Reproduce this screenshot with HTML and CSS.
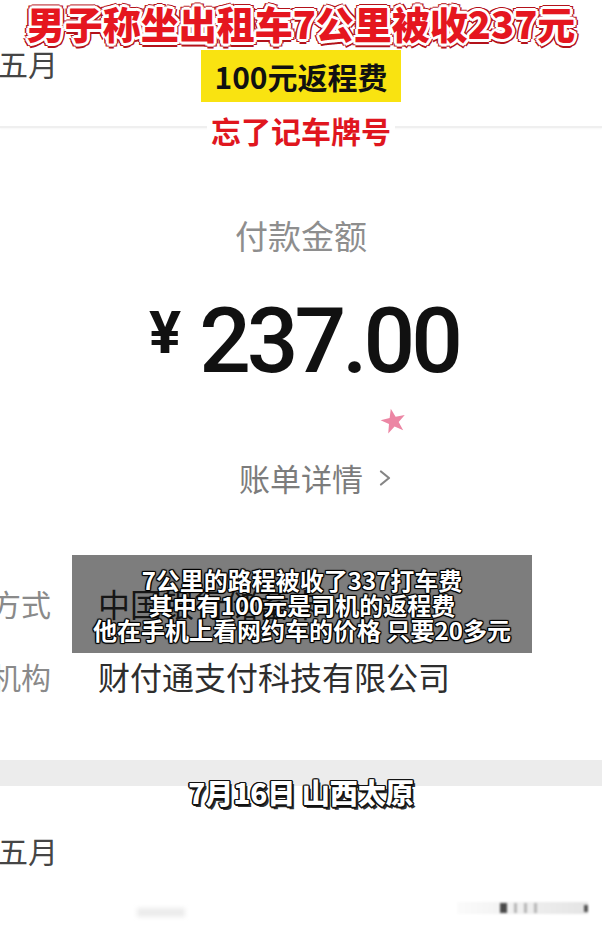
FILE: index.html
```html
<!DOCTYPE html>
<html lang="zh-CN">
<head>
  <meta charset="UTF-8" />
  <meta name="viewport" content="width=device-width, initial-scale=1.0"/>
  <title>付款金额</title>
  <link rel="stylesheet" href="styles.css">
</head>
<body>
  <div class="screen">
    <div class="month">五月</div>
    <div class="divider"></div>
    <div class="pay-label">付款金额</div>
    <div class="amount">
      <span class="yen">¥</span>
      <span class="num">237.00</span>
    </div>
    <div class="detail-link">
      <span>账单详情</span>
      <svg class="chevron" width="12" height="16" viewBox="0 0 12 16">
        <polyline points="2,1.5 10,8 2,14.5" fill="none" stroke="#858585" stroke-width="2.2" stroke-linecap="round" stroke-linejoin="round"/>
      </svg>
    </div>
    <div class="info-row first">
      <span class="info-key">支付方式</span>
      <span class="info-val">中国银行储蓄卡</span>
    </div>
    <div class="info-row">
      <span class="info-key">收单机构</span>
      <span class="info-val">财付通支付科技有限公司</span>
    </div>
    <div class="band"></div>
    <div class="month month-next">五月</div>
    <div class="smudges">
      <div class="smudge-left"></div>
      <div class="smudge-bar">
        <span class="stub dark"></span>
        <span class="stub"></span>
        <span class="stub"></span>
        <span class="stub"></span>
        <span class="stub end"></span>
      </div>
    </div>
  </div>

  <!-- video captions laid over the screenshot -->
  <div class="headline">
    <h1 class="title">男子称坐出租车7公里被收237元</h1>
    <div class="tag">100元返程费</div>
    <div class="subtitle">忘了记车牌号</div>
  </div>

  <svg class="star" width="27" height="27" viewBox="0 0 27 27">
    <polygon transform="rotate(-12 13.5 13.5)" points="13.5,0.5 16.56,9.29 25.86,9.48 18.45,15.11 21.14,24.02 13.5,18.7 5.86,24.02 8.55,15.11 1.14,9.48 10.44,9.29" fill="#ec86a4"/>
  </svg>

  <div class="caption">
    <div>7公里的路程被收了337打车费</div>
    <div>其中有100元是司机的返程费</div>
    <div>他在手机上看网约车的价格 只要20多元</div>
  </div>

  <div class="place">7月16日 山西太原</div>
</body>
</html>
```

FILE: styles.css
```css
body {
  margin: 0;
  width: 602px;
  height: 927px;
  overflow: hidden;
  position: relative;
  background: #fff;
  font-family: "Noto Sans CJK SC", sans-serif;
}

.screen {
  display: flex;
  flex-direction: column;
}

.month {
  margin: 48px 0 0 -2px;
  font-size: 30px;
  line-height: 30px;
  color: #454545;
}

.divider {
  margin-top: 48px;
  height: 2px;
  background: #efefef;
  box-shadow: 0 1px 2px rgba(0, 0, 0, 0.04);
}

.pay-label {
  margin-top: 89px;
  font-size: 33px;
  line-height: 36px;
  color: #8e8e8e;
  text-align: center;
}

.amount {
  margin-top: 38px;
  height: 100px;
  display: flex;
  justify-content: center;
  align-items: center;
  color: #111;
  font-family: Roboto, "Liberation Sans", sans-serif;
}

.yen {
  margin: 0 18px 16px 6px;
  font-size: 60px;
  line-height: 60px;
  font-weight: 700;
}

.num {
  font-size: 91px;
  line-height: 100px;
  font-weight: 500;
  letter-spacing: -4px;
}

.detail-link {
  margin-top: 70px;
  padding-left: 28px;
  display: flex;
  justify-content: center;
  align-items: center;
  gap: 16px;
  font-size: 31px;
  line-height: 34px;
  color: #7c7c7c;
}

.info-row {
  margin-top: 37px;
  height: 36px;
  display: flex;
  align-items: center;
  font-size: 32px;
  line-height: 36px;
}

.info-row.first {
  margin-top: 90px;
}

.info-key {
  flex: none;
  width: 120px;
  margin-left: -69px;
  text-align: right;
  font-size: 30px;
  color: #8a8a8a;
  white-space: nowrap;
}

.info-val {
  margin-left: 47px;
  color: #2e2e2e;
  white-space: nowrap;
}

.band {
  margin-top: 66px;
  height: 26px;
  background: #ececec;
}

.month-next {
  margin-top: 49px;
}

.smudges {
  margin-top: 33px;
  height: 20px;
  display: flex;
}

.smudge-left {
  margin: 10px 0 0 137px;
  width: 48px;
  height: 9px;
  background: #ececec;
  filter: blur(2px);
}

.smudge-bar {
  margin: 4px 14px 0 auto;
  width: 131px;
  height: 12px;
  display: flex;
  align-items: center;
  background: linear-gradient(to right, #fbfbfb, #e4e4e4);
  filter: blur(1.2px);
}

.stub {
  width: 3px;
  height: 10px;
  margin-left: 7px;
  background: #b8b8b8;
}

.stub.dark {
  width: 7px;
  margin-left: 43px;
  background: #4a4a4a;
}

.stub.end {
  width: 4px;
  height: 7px;
  margin-left: auto;
  background: #555;
}

/* captions */

.headline {
  position: absolute;
  top: 0;
  left: 0;
  right: 0;
  display: flex;
  flex-direction: column;
  align-items: center;
}

.title {
  margin: 0;
  font-size: 38px;
  line-height: 45px;
  font-weight: 900;
  color: #e5161f;
  white-space: nowrap;
  text-shadow:
    3px 0 0 #fff, -3px 0 0 #fff, 0 3px 0 #fff, 0 -3px 0 #fff,
    2px 2px 0 #fff, -2px 2px 0 #fff, 2px -2px 0 #fff, -2px -2px 0 #fff,
    4.5px 0 0.5px #b3121a, -4.5px 0 0.5px #b3121a, 0 4.5px 0.5px #b3121a, 0 -4.5px 0.5px #b3121a,
    3.2px 3.2px 0.5px #b3121a, -3.2px 3.2px 0.5px #b3121a, 3.2px -3.2px 0.5px #b3121a, -3.2px -3.2px 0.5px #b3121a;
}

.tag {
  margin-top: 5px;
  width: 200px;
  height: 52px;
  display: flex;
  justify-content: center;
  align-items: center;
  background: #f9e311;
  font-size: 30px;
  font-weight: 700;
  color: #111;
}

.subtitle {
  margin-top: 11px;
  padding: 0 4px;
  background: #fff;
  font-size: 30px;
  line-height: 34px;
  font-weight: 700;
  color: #e0161e;
}

.star {
  position: absolute;
  left: 380px;
  top: 408px;
  filter: blur(0.6px);
}

.caption {
  position: absolute;
  left: 72px;
  top: 555px;
  width: 460px;
  height: 98px;
  display: flex;
  flex-direction: column;
  justify-content: center;
  align-items: center;
  background: rgba(0, 0, 0, 0.51);
  font-size: 24px;
  line-height: 25px;
  font-weight: 700;
  color: #fff;
  white-space: nowrap;
  text-shadow:
    1px 0 0 #000, -1px 0 0 #000, 0 1px 0 #000, 0 -1px 0 #000,
    1px 1px 1px #000, -1px 1px 1px #000, 1px -1px 1px #000, -1px -1px 1px #000;
}

.place {
  position: absolute;
  left: 0;
  right: 0;
  top: 775px;
  text-align: center;
  font-size: 28px;
  line-height: 34px;
  font-weight: 900;
  color: #fff;
  text-shadow:
    1.5px 0 0 #111, -1.5px 0 0 #111, 0 1.5px 0 #111, 0 -1.5px 0 #111,
    1px 1px 0 #111, -1px 1px 0 #111, 1px -1px 0 #111, -1px -1px 0 #111,
    2.5px 2.5px 0.5px #333;
}
```
